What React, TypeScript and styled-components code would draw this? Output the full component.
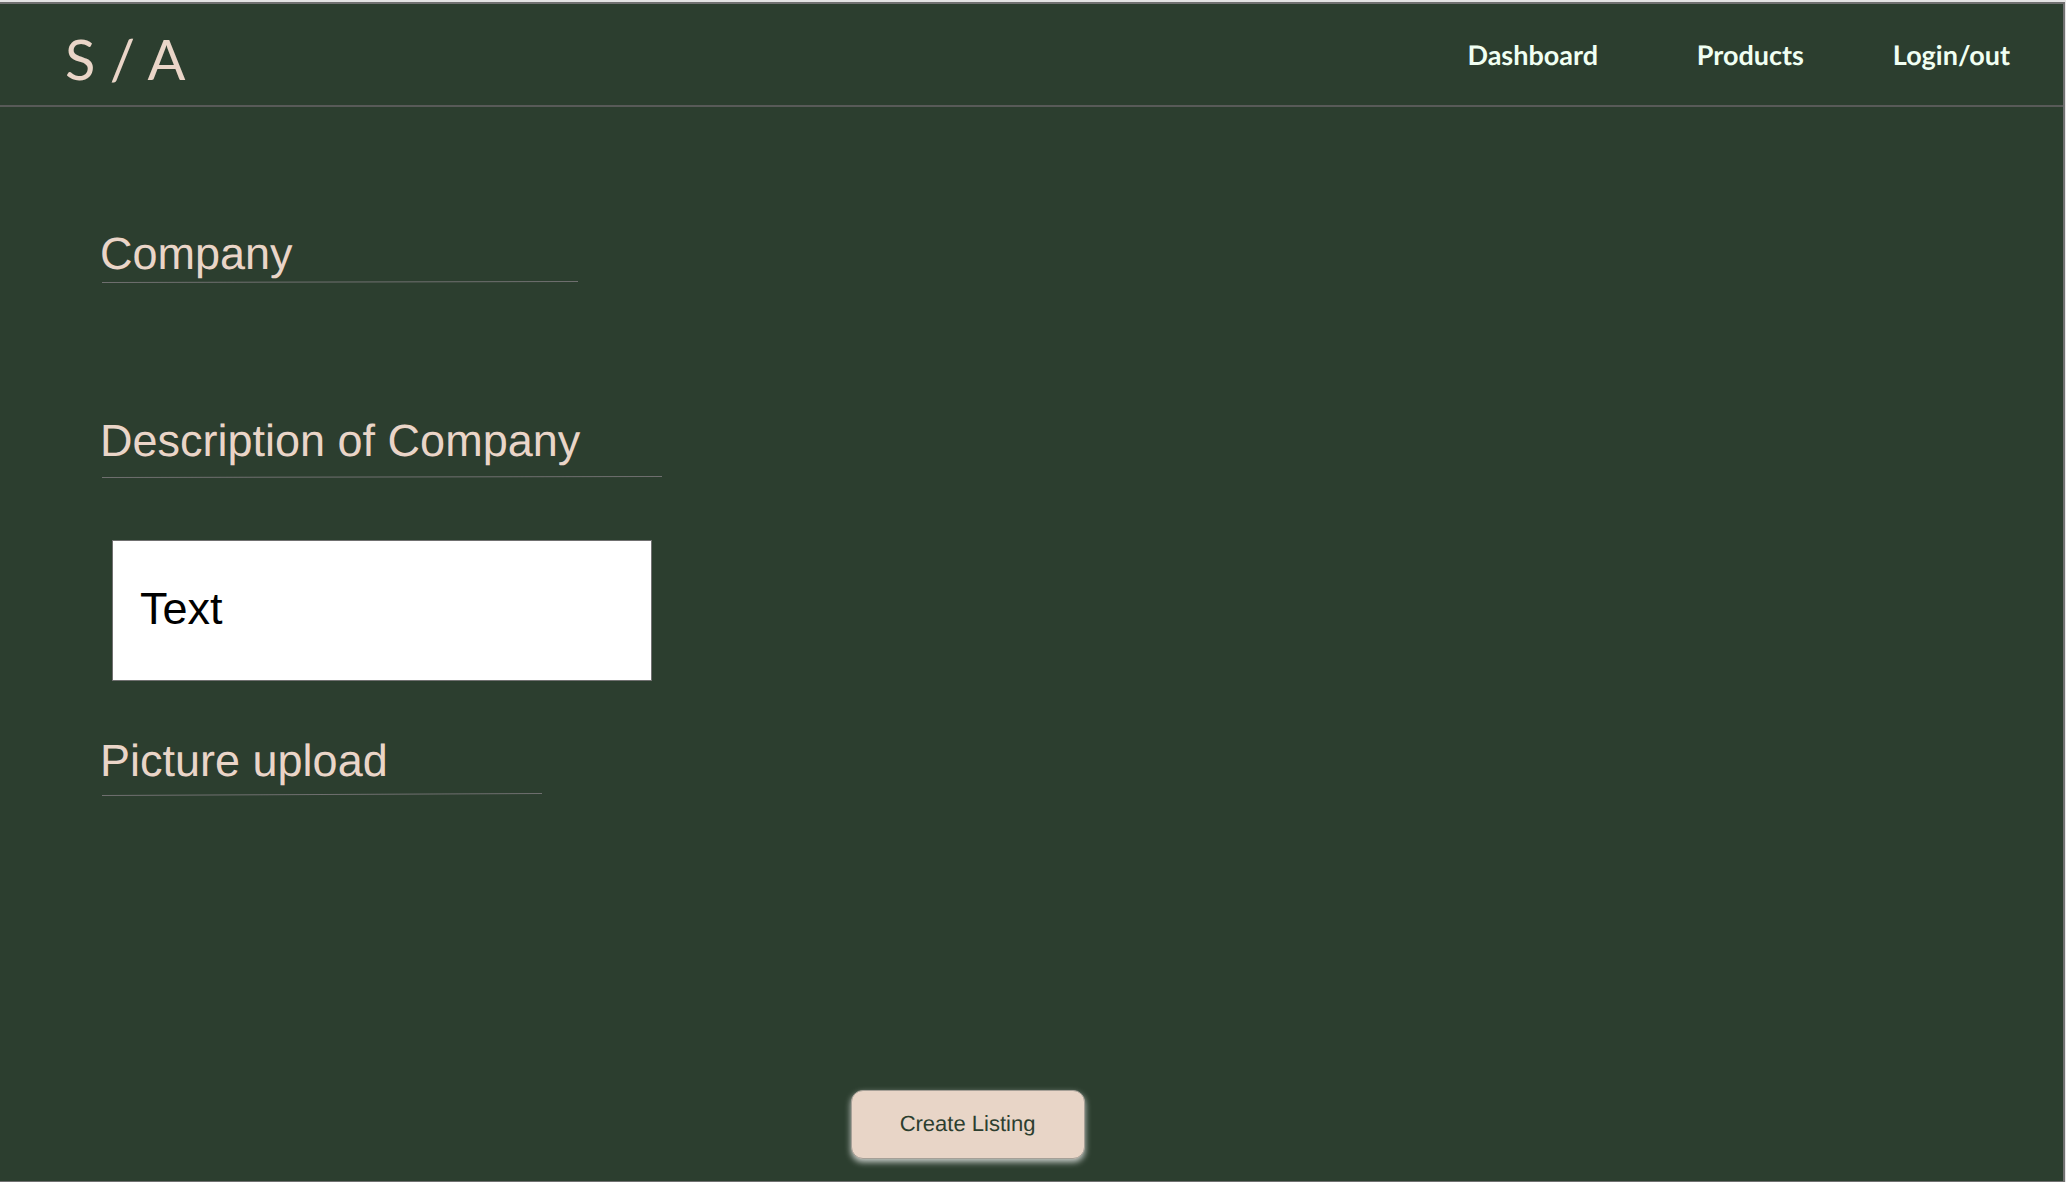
import React from "react";
import styled, { createGlobalStyle } from "styled-components";

const color = {
  forest: "#2c3e2f",
  blush: "#ead5c8",
  mint: "#f0fff2",
  rule: "#585a58",
  frame: "#707070",
};

const GlobalStyle = createGlobalStyle`
  *, *::before, *::after { box-sizing: border-box; }
  body {
    margin: 0;
    background: #e4e4e4;
    font-family: "Liberation Sans", Arial, sans-serif;
    text-rendering: geometricPrecision;
  }
`;

const Page = styled.div`
  display: flex;
  flex-direction: column;
  min-height: calc(100vh - 2px);
  margin: 2px 1px 0 0;
  background: ${color.forest};
  border: 2px solid ${color.frame};
  border-left: 0;
  border-bottom-width: 1px;
`;

const Header = styled.header`
  display: flex;
  align-items: flex-start;
  justify-content: space-between;
  height: 103px;
  padding: 23px 53px 0 65px;
  border-bottom: 2px solid ${color.rule};
`;

const Logo = styled.a`
  color: ${color.blush};
  font: 400 56px/64px Lato, sans-serif;
  text-decoration: none;
`;

const Nav = styled.nav`
  display: grid;
  grid-template-columns: repeat(3, 206px);
  justify-items: end;
  padding-top: 12px;
`;

const NavLink = styled.a`
  color: ${color.mint};
  font: 700 27px/32px Lato, sans-serif;
  text-decoration: none;
`;

const Form = styled.form`
  flex: 1;
  display: flex;
  flex-direction: column;
  padding: 121px 100px 22px;
`;

const Field = styled.div<{ $gap: number }>`
  display: flex;
  flex-direction: column;
  align-items: flex-start;
  margin-bottom: ${(p) => p.$gap}px;
`;

const Label = styled.label<{ $space: number }>`
  color: ${color.blush};
  font-size: 45px;
  font-weight: 400;
  line-height: 52px;
  margin: 0 0 ${(p) => p.$space}px;
`;

const RuleSvg = styled.svg<{ $width: number }>`
  display: block;
  width: ${(p) => p.$width}px;
  max-width: 100%;
  height: 4px;
  margin-left: 2px;
`;

const TextBox = styled.input`
  width: 540px;
  max-width: 100%;
  height: 141px;
  margin: 0 0 54px 12px;
  padding: 0 27px 4px;
  border: 1px solid ${color.frame};
  border-radius: 0;
  background: #fff;
  color: #000;
  font: 45px "Liberation Sans", Arial, sans-serif;
`;

const Actions = styled.div`
  display: flex;
  justify-content: center;
  margin-top: auto;
  padding-right: 128px;
`;

const Submit = styled.button`
  width: 234px;
  height: 69px;
  padding: 0 0 2px;
  border: 1px solid #a6a097;
  border-radius: 12px;
  background: #e8d5c7;
  box-shadow: 0 3px 6px rgba(255, 255, 255, 0.75);
  color: ${color.forest};
  font: 22px/26px "Liberation Sans", Arial, sans-serif;
  text-rendering: geometricPrecision;
`;

function Rule({ width, rise = 1 }: { width: number; rise?: number }) {
  return (
    <RuleSvg $width={width} viewBox={`0 0 ${width} 4`} preserveAspectRatio="none" aria-hidden="true">
      <line x1="0" y1="2.5" x2={width} y2={2.5 - rise} stroke="#707070" strokeWidth="1" />
    </RuleSvg>
  );
}

export default function App() {
  return (
    <>
      <GlobalStyle />
      <Page>
        <Header>
          <Logo href="#">S / A</Logo>
          <Nav>
            <NavLink href="#dashboard">Dashboard</NavLink>
            <NavLink href="#products">Products</NavLink>
            <NavLink href="#login">Login/out</NavLink>
          </Nav>
        </Header>
        <Form onSubmit={(e) => e.preventDefault()}>
          <Field $gap={131}>
            <Label as="h2" $space={0}>Company</Label>
            <Rule width={476} />
          </Field>
          <Field $gap={61}>
            <Label htmlFor="description" $space={8}>Description of Company</Label>
            <Rule width={560} />
          </Field>
          <TextBox id="description" type="text" defaultValue="Text" />
          <Field $gap={0}>
            <Label as="h2" $space={6}>Picture upload</Label>
            <Rule width={440} rise={2} />
          </Field>
          <Actions>
            <Submit type="submit">Create Listing</Submit>
          </Actions>
        </Form>
      </Page>
    </>
  );
}
